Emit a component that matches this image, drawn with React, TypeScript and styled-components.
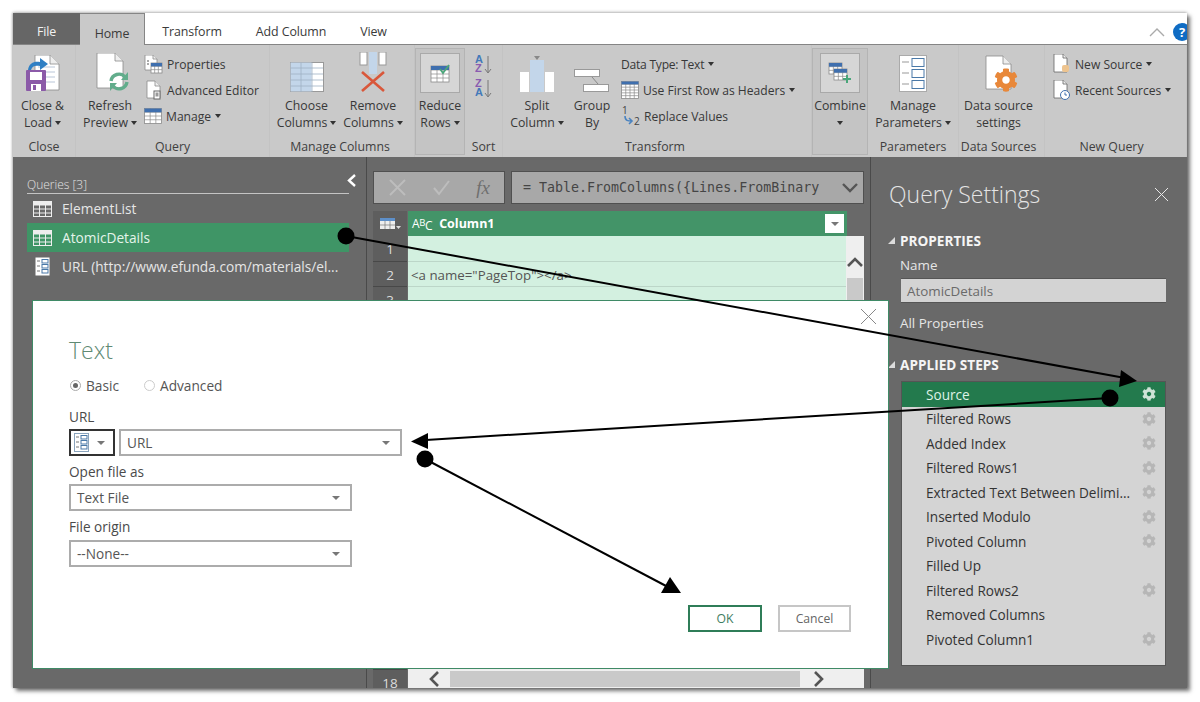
import React from 'react';
import styled, { createGlobalStyle } from 'styled-components';
import { FaCog } from 'react-icons/fa';

const Global = createGlobalStyle`
  html, body { margin: 0; padding: 0; background: #fff; }
  * { box-sizing: border-box; }
`;
const UI = `"Open Sans", "Noto Sans", sans-serif`;

const Page = styled.div`
  position: relative; width: 1200px; height: 702px; padding: 13px; overflow: hidden;
  font-family: ${UI}; background: #fff;
`;
const Win = styled.div`
  position: relative; width: 1174px; height: 675px; background: #696969; display: flex; flex-direction: column;
  box-shadow: 3px 3px 4px rgba(0,0,0,.55), 0 -1px 3px rgba(0,0,0,.22), -1px 0 2px rgba(0,0,0,.18);
  overflow: hidden;
`;
const TabBar = styled.div`
  height: 32px; flex: none; display: flex; align-items: stretch; background: #fff; border-bottom: 1px solid #858585;
`;
const Tab = styled.div<{ $w: number; $kind?: 'file' | 'active' }>`
  width: ${p => p.$w}px; display: flex; align-items: center; justify-content: center; font-size: 12.4px; letter-spacing: -.1px; padding-top: 6px;
  color: ${p => (p.$kind === 'file' ? '#f2f2f2' : '#3a3a3a')};
  background: ${p => (p.$kind === 'file' ? '#666' : p.$kind === 'active' ? '#c9c9c9' : '#fff')};
  ${p => p.$kind === 'active' ? 'height: 33px; border: 1px solid #858585; border-bottom: 0; border-left: 0;' : ''}
`;
const TabTools = styled.div`
  margin-left: auto; margin-right: -4px; display: flex; align-items: center; gap: 8px; padding-top: 7px;
`;
const Help = styled.div`
  width: 18px; height: 18px; border-radius: 50%; background: #0f6cc4; color: #fff; font-size: 13px; font-weight: 700;
  display: flex; align-items: center; justify-content: center;
`;
const Ribbon = styled.div`
  height: 112px; flex: none; display: flex; background: #c9c9c9; color: #383838;
`;
const Group = styled.div<{ $w: number; $pr?: number }>`
  width: ${p => p.$w}px; flex: none; display: flex; flex-direction: column; padding-right: ${p => p.$pr ?? 0}px;
  position: relative; border-right: 1px solid #c3c3c3;
`;
const GroupBody = styled.div`
  flex: 1; display: flex; min-height: 0;
`;
const GroupLabel = styled.div`
  height: 22px; flex: none; display: flex; align-items: center; justify-content: center; font-size: 12.3px; color: #404040; white-space: nowrap;
`;
const Large = styled.div<{ $w: number }>`
  width: ${p => p.$w}px; flex: none; display: flex; flex-direction: column; align-items: center;
`;
const IconSlot = styled.div<{ $dx?: number }>`
  height: 52px; flex: none; display: flex; align-items: flex-end; justify-content: center; padding-bottom: 4px; padding-left: ${p => p.$dx ?? 0}px;
`;
const Line = styled.div`
  height: 17px; line-height: 17px; font-size: 12.3px; white-space: nowrap; display: flex; align-items: center; gap: 3px;
`;
const Caret = styled.span`
  display: inline-block; width: 0; height: 0; border-left: 3.5px solid transparent; border-right: 3.5px solid transparent;
  border-top: 4px solid #333; flex: none;
`;
const Hot = styled.div<{ $w: number }>`
  width: ${p => p.$w}px; flex: none; margin: 3px 0 2px; background: #c4c4c4; border: 1px solid #b4b4b4;
  display: flex; flex-direction: column; align-items: center; padding-top: 4px;
`;
const HotIcon = styled.div`
  width: 40px; height: 40px; background: #d6d6d6; border: 1px solid #a9a9a9; display: flex; align-items: center; justify-content: center; margin-bottom: 4px;
`;
const Stack = styled.div<{ $ml?: number }>`
  display: flex; flex-direction: column; padding-top: 6px; margin-left: ${p => p.$ml ?? 0}px;
`;
const Small = styled.div<{ $tight?: boolean }>`
  height: 26px; display: flex; align-items: center; gap: 4px; font-size: 12.1px; white-space: nowrap; letter-spacing: ${p => (p.$tight ? '-.25px' : '0')};
  & > svg { flex: none; }
`;
const SortStack = styled.div`
  width: 100%; display: flex; flex-direction: column; align-items: center; padding-top: 9px; gap: 5px;
`;
const Main = styled.div`
  flex: 1; display: flex; min-height: 0;
`;
const Queries = styled.div`
  width: 353px; flex: none; padding: 18px 17px 0 14px; color: #eee;
`;
const QHead = styled.div`
  height: 19px; border-bottom: 1px solid #c4c4c4; font-size: 12px; font-weight: 300; color: #e2e2e2; line-height: 20px; position: relative;
`;
const Collapse = styled.div`
  position: absolute; right: -8px; top: -1px; height: 14px; display: flex;
`;
const QItem = styled.div<{ $on?: boolean }>`
  height: 29px; display: flex; align-items: center; padding-left: 6px; gap: 10px; font-size: 13.7px; white-space: nowrap;
  color: ${p => (p.$on ? '#e4f4ea' : '#e6e6e6')}; background: ${p => (p.$on ? '#3f9566' : 'transparent')};
  & > svg { flex: none; }
`;
const QList = styled.div`
  padding-top: 0;
`;
const Center = styled.div`
  width: 505px; flex: none; padding: 14px 6px 0 6px; border-left: 1px solid #4a4a4a; border-right: 1px solid #4a4a4a; display: flex; flex-direction: column; min-height: 0;
`;
const FxRow = styled.div`
  height: 33px; flex: none; display: flex; gap: 6px;
`;
const FxTools = styled.div`
  width: 132px; flex: none; background: #a8a8a8; border: 1px solid #505050; display: flex; align-items: center; justify-content: space-between; padding: 0 14px 0 15px;
`;
const Fx = styled.span`
  font-family: "Liberation Serif", serif; font-style: italic; font-size: 19px; color: #6f6f6f;
`;
const Formula = styled.div`
  flex: 1; background: #a8a8a8; border: 1px solid #505050; display: flex; align-items: center; padding: 0 5px 0 11px; justify-content: space-between;
  font-family: "DejaVu Sans Mono", monospace; font-size: 13.3px; color: #454545; white-space: pre;
`;
const HeadRow = styled.div`
  height: 25px; flex: none; margin-top: 7px; display: flex; gap: 1px; margin-right: 17px;
`;
const Corner = styled.div`
  width: 34px; flex: none; background: #5e5e5e; display: flex; align-items: center; justify-content: center;
`;
const ColHead = styled.div`
  flex: 1; background: #439468; display: flex; align-items: center; padding: 0 3px 0 4px; color: #fff; font-size: 12.5px; font-weight: 700; gap: 7px;
`;
const TypeTag = styled.span`
  font-weight: 400; font-size: 12px; color: #fff; letter-spacing: -.4px; display: inline-flex; align-items: baseline;
`;
const Sup = styled.span<{ $up: number }>`
  position: relative; top: ${p => p.$up}px; font-size: ${p => (p.$up < 0 ? 9.5 : 12)}px;
`;
const DropBtn = styled.div`
  width: 19px; height: 19px; background: #fff; margin-left: auto; display: flex; align-items: center; justify-content: center;
`;
const TableBody = styled.div`
  flex: 1; display: flex; min-height: 0; gap: 1px;
`;
const Nums = styled.div`
  width: 34px; flex: none; overflow: hidden; background: #5e5e5e;
`;
const Num = styled.div`
  height: 25.5px; flex: none; display: flex; align-items: center; justify-content: center; padding-top: 2px; font-size: 13.5px; color: #dcdcdc; border-bottom: 1px solid #484848;
`;
const DataCol = styled.div`
  flex: 1; display: flex; flex-direction: column; min-width: 0;
`;
const DataTop = styled.div`
  flex: 1; display: flex; min-height: 0;
`;
const Cells = styled.div`
  flex: 1; overflow: hidden; background: #d3f0e0;
`;
const Cell = styled.div`
  height: 25.5px; border-bottom: 1px solid #bcd6c8; display: flex; align-items: center; padding: 2px 0 0 3px; font-size: 13.3px; color: #555; white-space: nowrap;
`;
const VScroll = styled.div`
  width: 18px; flex: none; background: #efefef; display: flex; flex-direction: column; align-items: center; padding-top: 21px;
`;
const VThumb = styled.div`
  width: 16px; flex: 1; margin-top: 10px; background: #c9c9c9;
`;
const HScroll = styled.div`
  height: 19px; flex: none; background: #efefef; display: flex; align-items: center; padding: 0 40px 0 21px;
`;
const HThumb = styled.div`
  flex: 1; height: 16px; margin: 0 13px 0 10px; background: #c9c9c9;
`;
const Settings = styled.div`
  flex: 1; padding: 21px 21px 0 29px; color: #eee; display: flex; flex-direction: column; position: relative;
`;
const SetHead = styled.div`
  height: 32px; flex: none; margin-left: -11px; margin-right: -3px; display: flex; align-items: center; justify-content: space-between;
  font-size: 23px; font-weight: 300; color: #e4e4e4; white-space: nowrap;
`;
const Section = styled.div<{ $mt: number }>`
  height: 18px; flex: none; margin-top: ${p => p.$mt}px; font-size: 13.6px; font-weight: 700; color: #f5f5f5; line-height: 18px; position: relative; white-space: nowrap;
`;
const Tri = styled.span`
  position: absolute; left: -12px; top: 5px; width: 0; height: 0; border-left: 7px solid transparent; border-bottom: 7px solid #dcdcdc;
`;
const Plain = styled.div<{ $mt: number }>`
  height: 18px; flex: none; margin-top: ${p => p.$mt}px; font-size: 13.4px; line-height: 18px; color: #e6e6e6;
`;
const NameBox = styled.div`
  height: 25px; flex: none; margin-top: 4px; margin-left: 1px; background: #d3d3d3; border: 1px solid #555; border-width: 1px 0 1px 0; display: flex; align-items: center; padding-left: 6px; font-size: 13.4px; color: #6a6a6a;
`;
const Steps = styled.div`
  height: 285px; flex: none; margin-top: 7px; margin-left: 1px; background: #d4d4d4; border: 1px solid #555;
`;
const Step = styled.div<{ $on?: boolean }>`
  height: 24.5px; display: flex; align-items: center; padding: 0 9px 0 24px; font-size: 13.6px; white-space: nowrap;
  color: ${p => (p.$on ? '#def2e5' : '#333')}; background: ${p => (p.$on ? '#237a4d' : 'transparent')};
  justify-content: space-between;
`;
const Dialog = styled.div`
  position: absolute; left: 19px; top: 287px; width: 857px; height: 369px; background: #fff; border: 1px solid #3f8a66;
  padding: 33px 37px 36px 36px; display: flex; flex-direction: column; color: #444;
`;
const DlgClose = styled.div`
  position: absolute; right: 11px; top: 7px; height: 17px; display: flex;
`;
const DlgTitle = styled.div`
  height: 32px; flex: none; font-size: 23px; font-weight: 300; color: #5f8a73; line-height: 32px;
`;
const Radios = styled.div`
  height: 18px; flex: none; margin-top: 10px; display: flex; align-items: center; font-size: 13.7px; color: #555; gap: 5px;
`;
const Radio = styled.span<{ $on?: boolean }>`
  width: 11px; height: 11px; border-radius: 50%; border: 1px solid ${p => (p.$on ? '#aaa' : '#ccc')}; background: #fff; display: flex; align-items: center; justify-content: center;
  margin-left: ${p => (p.$on ? 1 : 20)}px;
  &::after { content: ''; width: 5px; height: 5px; border-radius: 50%; background: ${p => (p.$on ? '#666' : 'transparent')}; }
`;
const FieldLabel = styled.div<{ $mt: number }>`
  height: 18px; flex: none; margin-top: ${p => p.$mt}px; font-size: 13.6px; line-height: 18px; color: #4a4a4a;
`;
const SelectRow = styled.div`
  margin-top: 3px; display: flex; gap: 4px; flex: none;
`;
const TypeBtn = styled.div`
  width: 46px; height: 27px; border: 2px solid #333; display: flex; align-items: center; gap: 8px; padding-left: 3px;
`;
const Select = styled.div<{ $w: number; $mt?: number }>`
  width: ${p => p.$w}px; height: 27px; flex: none; margin-top: ${p => p.$mt ?? 0}px; border: 2px solid #acacac; display: flex; align-items: center; justify-content: space-between;
  padding: 0 10px 0 6px; font-size: 13.6px; color: #555; background: #fff;
`;
const SelCaret = styled.span`
  width: 0; height: 0; border-left: 4px solid transparent; border-right: 4px solid transparent; border-top: 4px solid #777;
`;
const Footer = styled.div`
  margin-top: auto; display: flex; justify-content: flex-end; gap: 16px;
`;
const Btn = styled.div<{ $ok?: boolean }>`
  width: ${p => (p.$ok ? 74 : 73)}px; height: 27px; border: 2px solid ${p => (p.$ok ? '#2f7d58' : '#c6c6c6')}; color: ${p => (p.$ok ? '#3f7d5f' : '#666')};
  display: flex; align-items: center; justify-content: center; font-size: 12.2px;
`;
const Overlay = styled.svg`
  position: absolute; left: 0; top: 0; pointer-events: none;
`;

/* ---------- drawings ---------- */
const Doc = ({ x, y, w, h, f = 9, stroke = '#8a8a8a' }: { x: number; y: number; w: number; h: number; f?: number; stroke?: string }) => (
  <>
    <path d={`M${x} ${y}H${x + w - f}L${x + w} ${y + f}V${y + h}H${x}Z`} fill="#fff" stroke={stroke} strokeWidth=".8" />
    <path d={`M${x + w - f} ${y}V${y + f}H${x + w}`} fill="#eee" stroke={stroke} strokeWidth=".8" />
  </>
);
const Grid = ({ x, y, w, h, cols, rows, stroke = '#8a8a8a', head = '#3f6fae', fill = '#fff' }: { x: number; y: number; w: number; h: number; cols: number; rows: number; stroke?: string; head?: string; fill?: string }) => {
  const ls = [];
  for (let i = 1; i < cols; i++) ls.push(`M${x + (w * i) / cols} ${y}V${y + h}`);
  for (let i = 1; i < rows; i++) ls.push(`M${x} ${y + (h * i) / rows}H${x + w}`);
  return (
    <>
      <rect x={x} y={y} width={w} height={h} fill={fill} stroke={stroke} strokeWidth=".8" />
      <path d={ls.join('')} stroke={stroke} strokeWidth=".7" fill="none" />
      <rect x={x} y={y} width={w} height={h / rows} fill={head} />
    </>
  );
};
const CloseLoadIcon = () => (
  <svg width="36" height="38" viewBox="0 0 36 38">
    <Doc x={10} y={0} w={24} h={35} />
    <path d="M13 12H30M13 17H30M13 22H30M13 27H30" stroke="#b9c6d8" strokeWidth="1" />
    <path d="M3 15C4 8 9 6 15 7V3L23 9L15 15V11C10 10 7 11 6 15Z" fill="#2f7fc4" />
    <rect x="1" y="15" width="20" height="21" rx="1" fill="#8b5aa8" />
    <rect x="5" y="17" width="12" height="8" fill="#fff" />
    <rect x="6" y="29" width="10" height="7" fill="#fff" />
    <rect x="8" y="30" width="3" height="5" fill="#8b5aa8" />
  </svg>
);
const RefreshIcon = () => (
  <svg width="34" height="40" viewBox="0 0 34 40">
    <Doc x={1} y={0} w={26} h={35} f={8} />
    <path d="M15 28a8 8 0 0 1 14-4M31 29a8 8 0 0 1-14 4" fill="none" stroke="#62ad8c" strokeWidth="3.4" />
    <path d="M32 19v8h-7zM14 38v-8h7z" fill="#62ad8c" />
  </svg>
);
const PropsIcon = () => (
  <svg width="19" height="19" viewBox="0 0 19 19">
    <Doc x={1} y={0} w={12} h={15} f={4} />
    <path d="M3 6H5M3 9H5" stroke="#555" />
    <Grid x={7} y={8} w={11} h={10} cols={3} rows={3} />
  </svg>
);
const AdvIcon = () => (
  <svg width="19" height="20" viewBox="0 0 19 20">
    <Doc x={3} y={1} w={13} h={17} f={5} />
    <rect x="10" y="11" width="6" height="8" fill="#fff" stroke="#666" />
    <rect x="11.5" y="12.5" width="3" height="4" fill="#999" />
  </svg>
);
const TableIcon = ({ s = 18, h = 16 }: { s?: number; h?: number }) => (
  <svg width={s} height={h} viewBox={`0 0 ${s} ${h}`}>
    <Grid x={.5} y={.5} w={s - 1} h={h - 1} cols={3} rows={4} />
  </svg>
);
const ChooseIcon = () => (
  <svg width="34" height="31" viewBox="0 0 34 31">
    <rect x=".5" y=".5" width="33" height="29" fill="#fff" stroke="#999" />
    <rect x=".5" y=".5" width="21" height="29" fill="#c3d6ea" />
    <path d="M.5 6H33M.5 12H33M.5 18H33M.5 24H33M11 .5V30M22 .5V30" stroke="#9fb1c4" strokeWidth=".8" />
  </svg>
);
const RemoveIcon = () => (
  <svg width="28" height="41" viewBox="0 0 28 41">
    <rect x="1" y="0" width="7" height="13" fill="#fff" stroke="#999" />
    <rect x="20" y="0" width="7" height="13" fill="#fff" stroke="#999" />
    <rect x="10" y="0" width="8" height="22" fill="#c3d6ea" />
    <path d="M3 20L25 39M25 20L3 39" stroke="#d9573a" strokeWidth="2.6" />
  </svg>
);
const ReduceIcon = () => (
  <svg width="20" height="19" viewBox="0 0 20 19">
    <Grid x={1} y={2} w={18} h={16} cols={3} rows={4} />
    <path d="M10 5L13 9L19 1" fill="none" stroke="#4aa67a" strokeWidth="1.8" />
  </svg>
);
const SortText = styled.text<{ $c: string }>`
  font-family: "Liberation Sans", sans-serif; font-weight: 700; font-size: 11px; fill: ${p => p.$c};
`;
const SortIcon = ({ top, bottom }: { top: string; bottom: string }) => (
  <svg width="18" height="19" viewBox="0 0 18 19">
    <SortText $c={top === 'A' ? '#4379b9' : '#8a5bb0'} x="0" y="9">{top}</SortText>
    <SortText $c={bottom === 'A' ? '#4379b9' : '#8a5bb0'} x="0" y="18">{bottom}</SortText>
    <path d="M13 2V18M10 15L13 19L16 15" fill="none" stroke="#777" strokeWidth="1" />
  </svg>
);
const SplitIcon = () => (
  <svg width="36" height="38" viewBox="0 0 36 38">
    <rect x="1" y="17" width="9" height="20" fill="#fff" />
    <rect x="26" y="17" width="9" height="20" fill="#fff" />
    <rect x="11" y="5" width="14" height="32" fill="#c3d6ea" />
    <path d="M15 1H21L18 5Z" fill="#888" />
  </svg>
);
const GroupIcon = () => (
  <svg width="36" height="24" viewBox="0 0 36 24">
    <rect x=".5" y=".5" width="25" height="7" fill="#fff" stroke="#999" />
    <rect x="9.5" y="15.5" width="25" height="7" fill="#fff" stroke="#999" />
    <path d="M18 8L24 15" stroke="#888" />
  </svg>
);
const HeaderRowIcon = () => (
  <svg width="18" height="18" viewBox="0 0 18 18">
    <Grid x={.5} y={.5} w={17} h={17} cols={4} rows={6} />
  </svg>
);
const ReplaceText = styled.text`
  font-family: "Open Sans", sans-serif; font-size: 10px; fill: #444;
`;
const ReplaceIcon = () => (
  <svg width="19" height="21" viewBox="0 0 19 21">
    <ReplaceText x="1" y="8">1</ReplaceText>
    <ReplaceText x="13" y="19">2</ReplaceText>
    <path d="M4 10C4 15 7 15 11 15M8 12L11 15L8 18" fill="none" stroke="#4a83c0" strokeWidth="1.6" />
  </svg>
);
const CombineIcon = () => (
  <svg width="24" height="22" viewBox="0 0 24 22">
    <Grid x={1} y={1} w={13} h={11} cols={3} rows={3} />
    <Grid x={6} y={7} w={13} h={11} cols={3} rows={3} />
    <path d="M19 13V21M15 17H23" stroke="#4aa67a" strokeWidth="2" />
  </svg>
);
const ParamsIcon = () => (
  <svg width="28" height="38" viewBox="0 0 28 38">
    <rect x=".5" y=".5" width="27" height="36" fill="#fff" stroke="#aaa" />
    <path d="M3 7H10M3 18H10M3 29H10" stroke="#999" />
    <rect x="13" y="3.5" width="12" height="8" fill="#fff" stroke="#4a79a8" />
    <rect x="13" y="14.5" width="12" height="8" fill="#fff" stroke="#4a79a8" />
    <rect x="13" y="25.5" width="12" height="8" fill="#fff" stroke="#4a79a8" />
  </svg>
);
const DataSrcIcon = () => (
  <svg width="34" height="38" viewBox="0 0 34 38">
    <Doc x={1} y={1} w={25} h={33} f={8} />
    <foreignObject x="9" y="13" width="24" height="24">
      <FaCog size={24} color="#e8883a" />
    </foreignObject>
  </svg>
);
const NewSrcIcon = () => (
  <svg width="18" height="20" viewBox="0 0 18 20">
    <Doc x={1} y={0} w={13} h={18} f={4} stroke="#666" />
    <rect x="9" y="11" width="7" height="7" rx="2" fill="#eec48f" />
  </svg>
);
const RecentIcon = () => (
  <svg width="18" height="20" viewBox="0 0 18 20">
    <Doc x={1} y={0} w={13} h={18} f={4} stroke="#666" />
    <circle cx="12" cy="15" r="4.5" fill="#fff" stroke="#3f6fae" />
    <path d="M12 12.5V15H14" fill="none" stroke="#3f6fae" />
  </svg>
);
const QTable = ({ green }: { green?: boolean }) => (
  <svg width="19" height="16" viewBox="0 0 19 16">
    <rect x=".5" y=".5" width="18" height="15" fill={green ? '#3f9566' : '#696969'} stroke="#eee" />
    <rect x=".5" y=".5" width="18" height="4" fill="#eee" />
    <path d="M6.5 4V16M12.5 4V16M0 8H19M0 12H19" stroke="#eee" />
  </svg>
);
const ParamIcon = ({ dark, wide }: { dark?: boolean; wide?: boolean }) => (
  <svg width={wide ? 19 : 15} height="19" viewBox={wide ? '-2 0 19 19' : '0 0 15 19'}>
    <rect x=".5" y=".5" width="14" height="18" fill="#fff" stroke={dark ? '#8aa4bd' : 'none'} />
    <path d="M2 4H5M2 9H5M2 14H5" stroke="#777" />
    <rect x="7" y="2.5" width="6" height="3.5" fill="#fff" stroke="#4a79a8" />
    <rect x="7" y="7.5" width="6" height="3.5" fill="#fff" stroke="#4a79a8" />
    <rect x="7" y="12.5" width="6" height="3.5" fill="#fff" stroke="#4a79a8" />
  </svg>
);
const Cross = ({ s, c, w = 1 }: { s: number; c: string; w?: number }) => (
  <svg width={s} height={s} viewBox={`0 0 ${s} ${s}`}>
    <path d={`M1 1L${s - 1} ${s - 1}M${s - 1} 1L1 ${s - 1}`} stroke={c} strokeWidth={w} />
  </svg>
);
const Chev = ({ d, w, h, c, sw }: { d: string; w: number; h: number; c: string; sw: number }) => (
  <svg width={w} height={h} viewBox={`0 0 ${w} ${h}`}>
    <path d={d} fill="none" stroke={c} strokeWidth={sw} />
  </svg>
);
const Gear = ({ on, hidden }: { on?: boolean; hidden?: boolean }) =>
  hidden ? null : <FaCog size={14} color={on ? '#cfe3d6' : '#b6b6b6'} />;

const steps: [string, boolean][] = [
  ['Source', true], ['Filtered Rows', true], ['Added Index', true], ['Filtered Rows1', true],
  ['Extracted Text Between Delimi...', true], ['Inserted Modulo', true], ['Pivoted Column', true],
  ['Filled Up', false], ['Filtered Rows2', true], ['Removed Columns', false], ['Pivoted Column1', true],
];

export default function App() {
  return (
    <Page>
      <Global />
      <Win>
        <TabBar>
          <Tab $w={67} $kind="file">File</Tab>
          <Tab $w={65} $kind="active">Home</Tab>
          <Tab $w={94}>Transform</Tab>
          <Tab $w={104}>Add Column</Tab>
          <Tab $w={61}>View</Tab>
          <TabTools>
            <Chev d="M1 8L8 1L15 8" w={16} h={9} c="#aaa" sw={1.4} />
            <Help>?</Help>
          </TabTools>
        </TabBar>
        <Ribbon>
          <Group $w={63}>
            <GroupBody>
              <Large $w={59}>
                <IconSlot><CloseLoadIcon /></IconSlot>
                <Line>Close &amp;</Line>
                <Line>Load <Caret /></Line>
              </Large>
            </GroupBody>
            <GroupLabel>Close</GroupLabel>
          </Group>
          <Group $w={194}>
            <GroupBody>
              <Large $w={68}>
                <IconSlot $dx={6}><RefreshIcon /></IconSlot>
                <Line>Refresh</Line>
                <Line>Preview <Caret /></Line>
              </Large>
              <Stack>
                <Small><PropsIcon />Properties</Small>
                <Small><AdvIcon />Advanced Editor</Small>
                <Small><TableIcon />Manage <Caret /></Small>
              </Stack>
            </GroupBody>
            <GroupLabel>Query</GroupLabel>
          </Group>
          <Group $w={145} $pr={4}>
            <GroupBody>
              <Large $w={73}>
                <IconSlot><ChooseIcon /></IconSlot>
                <Line>Choose</Line>
                <Line>Columns <Caret /></Line>
              </Large>
              <Large $w={60}>
                <IconSlot><RemoveIcon /></IconSlot>
                <Line>Remove</Line>
                <Line>Columns <Caret /></Line>
              </Large>
            </GroupBody>
            <GroupLabel>Manage Columns</GroupLabel>
          </Group>
          <Hot $w={50}>
            <HotIcon><ReduceIcon /></HotIcon>
            <Line>Reduce</Line>
            <Line>Rows <Caret /></Line>
          </Hot>
          <Group $w={38}>
            <GroupBody>
              <SortStack>
                <SortIcon top="A" bottom="Z" />
                <SortIcon top="Z" bottom="A" />
              </SortStack>
            </GroupBody>
            <GroupLabel>Sort</GroupLabel>
          </Group>
          <Group $w={309} $pr={4}>
            <GroupBody>
              <Large $w={68}>
                <IconSlot><SplitIcon /></IconSlot>
                <Line>Split</Line>
                <Line>Column <Caret /></Line>
              </Large>
              <Large $w={42}>
                <IconSlot><GroupIcon /></IconSlot>
                <Line>Group</Line>
                <Line>By</Line>
              </Large>
              <Stack $ml={8}>
                <Small $tight>Data Type: Text <Caret /></Small>
                <Small><HeaderRowIcon />Use First Row as Headers <Caret /></Small>
                <Small><ReplaceIcon />Replace Values</Small>
              </Stack>
            </GroupBody>
            <GroupLabel>Transform</GroupLabel>
          </Group>
          <Hot $w={56}>
            <HotIcon><CombineIcon /></HotIcon>
            <Line>Combine</Line>
            <Line><Caret /></Line>
          </Hot>
          <Group $w={91}>
            <GroupBody>
              <Large $w={90}>
                <IconSlot><ParamsIcon /></IconSlot>
                <Line>Manage</Line>
                <Line>Parameters <Caret /></Line>
              </Large>
            </GroupBody>
            <GroupLabel>Parameters</GroupLabel>
          </Group>
          <Group $w={86} $pr={6}>
            <GroupBody>
              <Large $w={79}>
                <IconSlot $dx={6}><DataSrcIcon /></IconSlot>
                <Line>Data source</Line>
                <Line>settings</Line>
              </Large>
            </GroupBody>
            <GroupLabel>Data Sources</GroupLabel>
          </Group>
          <Group $w={142} $pr={8}>
            <GroupBody>
              <Stack $ml={8}>
                <Small><NewSrcIcon />New Source <Caret /></Small>
                <Small><RecentIcon />Recent Sources <Caret /></Small>
              </Stack>
            </GroupBody>
            <GroupLabel>New Query</GroupLabel>
          </Group>
        </Ribbon>
        <Main>
          <Queries>
            <QHead>
              Queries [3]
              <Collapse><Chev d="M8 1L2 6.5L8 12" w={10} h={14} c="#fff" sw={2.4} /></Collapse>
            </QHead>
            <QList>
              <QItem><QTable />ElementList</QItem>
              <QItem $on><QTable green />AtomicDetails</QItem>
              <QItem><ParamIcon wide />URL (http://www.efunda.com/materials/el...</QItem>
            </QList>
          </Queries>
          <Center>
            <FxRow>
              <FxTools>
                <Cross s={17} c="#bdbdbd" w={2} />
                <Chev d="M1 9L6 15L16 2" w={17} h={17} c="#bdbdbd" sw={2} />
                <Fx>fx</Fx>
              </FxTools>
              <Formula>
                {'= Table.FromColumns({Lines.FromBinary'}
                <Chev d="M1 1L8 8L15 1" w={16} h={10} c="#555" sw={2.4} />
              </Formula>
            </FxRow>
            <HeadRow>
              <Corner>
                <svg width="22" height="13" viewBox="0 0 22 13">
                  <rect x="1" y="1" width="15" height="11" fill="#eee" />
                  <rect x="1" y="1" width="15" height="3" fill="#5d8fc9" />
                  <path d="M6 4V12M11 4V12M1 8H16" stroke="#777" strokeWidth=".7" />
                  <path d="M17 9H22L19.5 12Z" fill="#ddd" />
                </svg>
              </Corner>
              <ColHead>
                <TypeTag><Sup $up={0}>A</Sup><Sup $up={-2}>B</Sup><Sup $up={2}>C</Sup></TypeTag>
                Column1
                <DropBtn><SelCaret /></DropBtn>
              </ColHead>
            </HeadRow>
            <TableBody>
              <Nums>
                {Array.from({ length: 18 }, (_, i) => <Num key={i}>{i + 1}</Num>)}
              </Nums>
              <DataCol>
                <DataTop>
                  <Cells>
                    {Array.from({ length: 17 }, (_, i) => (
                      <Cell key={i}>{i === 1 ? '<a name="PageTop"></a>' : ''}</Cell>
                    ))}
                  </Cells>
                  <VScroll>
                    <Chev d="M1 9L8 2L15 9" w={16} h={11} c="#555" sw={2.6} />
                    <VThumb />
                  </VScroll>
                </DataTop>
                <HScroll>
                  <Chev d="M9 1L2 8L9 15" w={11} h={16} c="#555" sw={2.6} />
                  <HThumb />
                  <Chev d="M2 1L9 8L2 15" w={11} h={16} c="#555" sw={2.6} />
                </HScroll>
              </DataCol>
            </TableBody>
          </Center>
          <Settings>
            <SetHead>Query Settings<Cross s={15} c="#e8e8e8" /></SetHead>
            <Section $mt={22}><Tri />PROPERTIES</Section>
            <Plain $mt={6}>Name</Plain>
            <NameBox>AtomicDetails</NameBox>
            <Plain $mt={11}>All Properties</Plain>
            <Section $mt={24}><Tri />APPLIED STEPS</Section>
            <Steps>
              {steps.map(([t, g], i) => (
                <Step key={t} $on={i === 0}>
                  {t}
                  <Gear on={i === 0} hidden={!g} />
                </Step>
              ))}
            </Steps>
          </Settings>
        </Main>
        <Dialog>
          <DlgClose><Cross s={17} c="#888" /></DlgClose>
          <DlgTitle>Text</DlgTitle>
          <Radios><Radio $on />Basic<Radio />Advanced</Radios>
          <FieldLabel $mt={14}>URL</FieldLabel>
          <SelectRow>
            <TypeBtn><ParamIcon dark /><SelCaret /></TypeBtn>
            <Select $w={283}>URL<SelCaret /></Select>
          </SelectRow>
          <FieldLabel $mt={7}>Open file as</FieldLabel>
          <Select $w={283} $mt={3}>Text File<SelCaret /></Select>
          <FieldLabel $mt={7}>File origin</FieldLabel>
          <Select $w={283} $mt={4}>--None--<SelCaret /></Select>
          <Footer>
            <Btn $ok>OK</Btn>
            <Btn>Cancel</Btn>
          </Footer>
        </Dialog>
      </Win>
      <Overlay width="1200" height="702" viewBox="0 0 1200 702">
        <g stroke="#000" strokeWidth="2" fill="#000">
          <line x1="346" y1="236" x2="1125" y2="378" />
          <circle cx="346" cy="236" r="8.5" stroke="none" />
          <path d="M1137 381L1119 387L1121 370Z" stroke="none" />
          <line x1="1110" y1="398" x2="426" y2="440" />
          <circle cx="1110" cy="398" r="8.5" stroke="none" />
          <path d="M411 441.5L428 433L428 449Z" stroke="none" />
          <line x1="425" y1="459" x2="668" y2="587" />
          <circle cx="425" cy="459" r="8.5" stroke="none" />
          <path d="M670 577L681 593L661 593Z" stroke="none" />
        </g>
      </Overlay>
    </Page>
  );
}
